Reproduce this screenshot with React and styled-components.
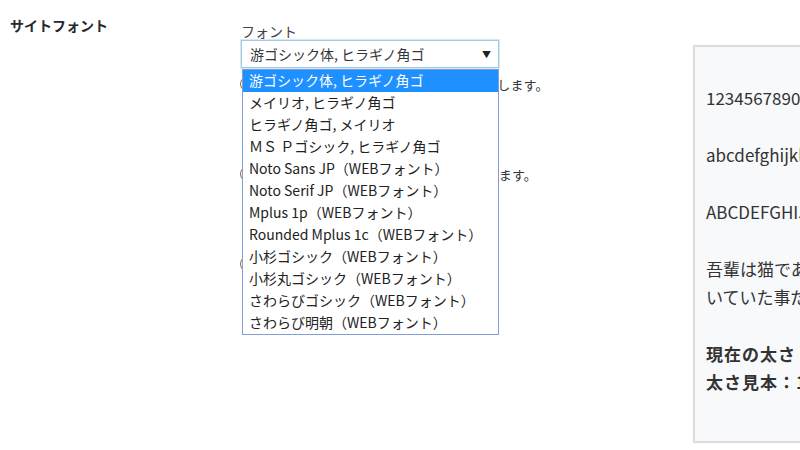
import styled, { createGlobalStyle } from 'styled-components';

const GlobalStyle = createGlobalStyle`
  html, body {
    margin: 0;
    padding: 0;
    background: #fff;
    overflow: hidden;
  }
  body {
    font-family: "Noto Sans CJK JP", "Noto Sans", sans-serif;
    color: #23282d;
  }
`;

const fonts = [
  '游ゴシック体, ヒラギノ角ゴ',
  'メイリオ, ヒラギノ角ゴ',
  'ヒラギノ角ゴ, メイリオ',
  'ＭＳ Ｐゴシック, ヒラギノ角ゴ',
  'Noto Sans JP（WEBフォント）',
  'Noto Serif JP（WEBフォント）',
  'Mplus 1p（WEBフォント）',
  'Rounded Mplus 1c（WEBフォント）',
  '小杉ゴシック（WEBフォント）',
  '小杉丸ゴシック（WEBフォント）',
  'さわらびゴシック（WEBフォント）',
  'さわらび明朝（WEBフォント）',
];

const options = [
  '各端末に標準のフォントを優先して表示します。',
  '外部のWEBフォントを読み込んで表示します。',
  'フォントを指定しません。',
];

const Page = styled.div`
  width: 800px;
  height: 450px;
  overflow: hidden;
`;

const FormRow = styled.div`
  display: grid;
  grid-template-columns: 231px 452px 950px;
  padding: 15px 0 0 10px;
`;

const Th = styled.div`
  font-size: 14px;
  font-weight: 700;
  line-height: 20px;
  color: #23282d;
`;

const Field = styled.div`
  padding-top: 7px;
`;

const FieldLabel = styled.div`
  font-size: 14px;
  line-height: 18px;
  color: #444;
`;

const SelectWrap = styled.div`
  position: relative;
  width: 258px;
`;

const SelectBox = styled.div`
  box-sizing: border-box;
  height: 28px;
  display: flex;
  align-items: center;
  justify-content: space-between;
  padding: 0 7px 0 8px;
  border: 1px solid #9ecbe6;
  box-shadow: 0 0 0 1px #d6e9f5;
  background: #fff;
  font-size: 14px;
  color: #32373c;
`;

const Arrow = styled.span`
  font-size: 9px;
  color: #222;
`;

const Dropdown = styled.ul`
  position: absolute;
  top: 29px;
  left: 1px;
  z-index: 2;
  box-sizing: border-box;
  width: 257px;
  margin: 0;
  padding: 0;
  list-style: none;
  background: #fff;
  border: 1px solid #7f9fd6;
`;

const Item = styled.li`
  height: 22px;
  line-height: 21px;
  padding-left: 6px;
  font-size: 14px;
  white-space: nowrap;
  color: ${(p) => (p.$active ? '#fff' : '#222')};
  background: ${(p) => (p.$active ? '#1e90ff' : 'transparent')};
`;

const Options = styled.div`
  padding-top: 6px;
`;

const OptionBlock = styled.div`
  height: 90px;
`;

const RadioLine = styled.label`
  display: flex;
  align-items: center;
  gap: 4px;
  height: 20px;
  margin-left: -1px;
  font-size: 13px;
  letter-spacing: 0.2px;
  color: #32373c;
`;

const Radio = styled.span`
  box-sizing: border-box;
  flex: none;
  width: 16px;
  height: 16px;
  border-radius: 50%;
  border: 1px solid #8c6b4f;
  background: #fff;
`;

const Note = styled.p`
  margin: 12px 0 0;
  font-size: 13px;
  color: #c98a4a;
`;

const Preview = styled.div`
  box-sizing: border-box;
  margin-top: 30px;
  height: 398px;
  padding: 37px 13px 0 11px;
  border: 2px solid #dcdcde;
  background: #f8f9fb;
  font-size: 17px;
  color: #333;
`;

const Sample = styled.p`
  margin: 0 0 29px;
  line-height: 28px;
`;

const Weight = styled.p`
  margin: 0;
  line-height: 28px;
  font-weight: 700;
  letter-spacing: 1px;

  &:first-of-type {
    margin-top: 2px;
  }
`;

export default function App() {
  return (
    <Page>
      <GlobalStyle />
      <FormRow>
        <Th>サイトフォント</Th>
        <Field>
          <FieldLabel>フォント</FieldLabel>
          <SelectWrap>
            <SelectBox>
              {fonts[0]}
              <Arrow>▼</Arrow>
            </SelectBox>
            <Dropdown>
              {fonts.map((f, i) => (
                <Item key={f} $active={i === 0}>
                  {f}
                </Item>
              ))}
            </Dropdown>
          </SelectWrap>
          <Options>
            {options.map((o) => (
              <OptionBlock key={o}>
                <RadioLine>
                  <Radio />
                  {o}
                </RadioLine>
                <Note>・</Note>
              </OptionBlock>
            ))}
          </Options>
        </Field>
        <Preview>
          <Sample>1234567890</Sample>
          <Sample>abcdefghijklmnopqrstuvwxyz</Sample>
          <Sample>ABCDEFGHIJKLMNOPQRSTUVWXYZ</Sample>
          <Sample>
            吾輩は猫である。名前はまだ無い。どこで生れたかとんと見当がつかぬ。何でも薄暗いじめじめした所でニャーニャー泣いていた事だけは記憶している。
          </Sample>
          <Weight>現在の太さ：400</Weight>
          <Weight>太さ見本：100 200 300 400 500 600 700</Weight>
        </Preview>
      </FormRow>
    </Page>
  );
}
